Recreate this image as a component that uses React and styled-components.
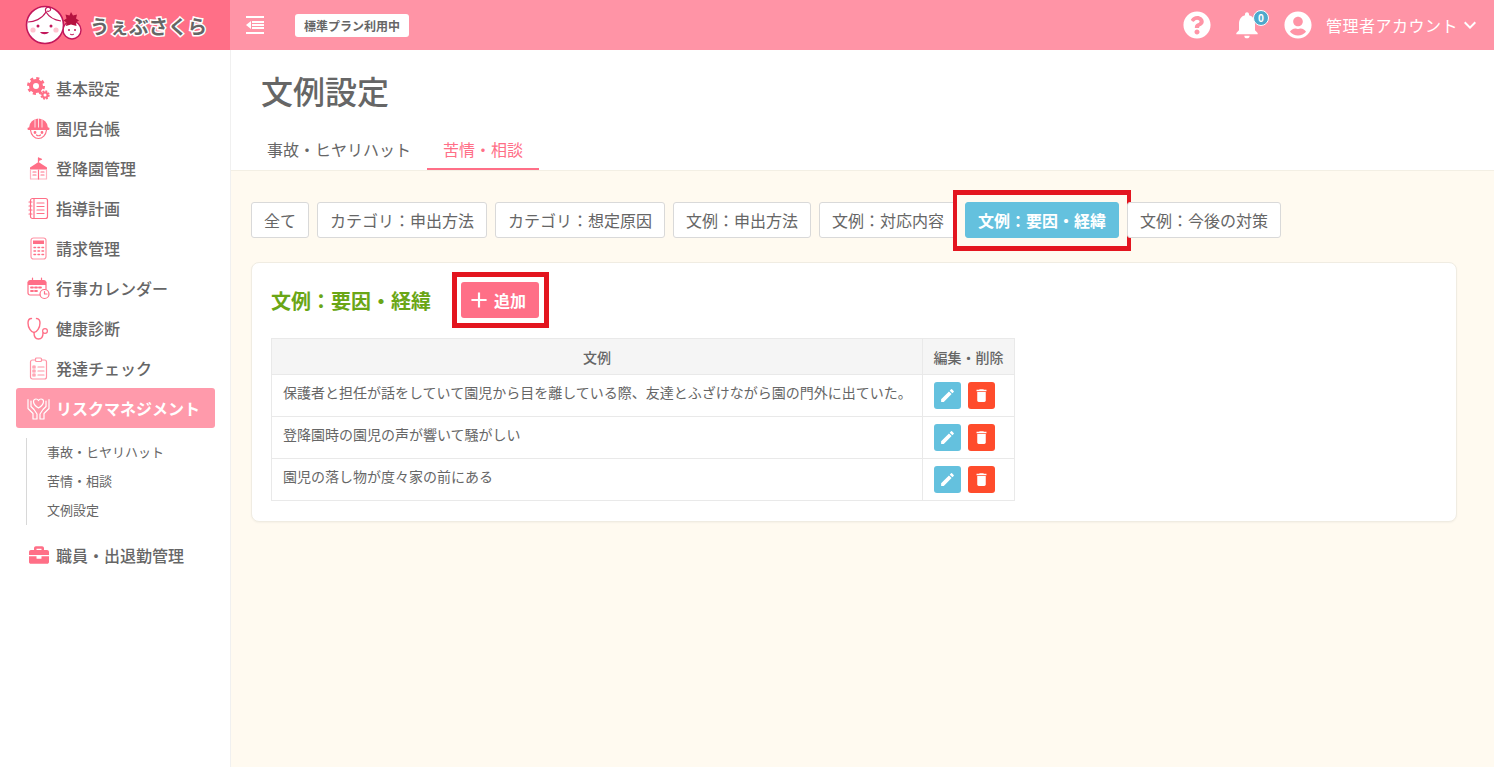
import React from 'react'
import styled, { createGlobalStyle } from 'styled-components'
import { MdEdit, MdDelete, MdAdd, MdKeyboardArrowDown, MdNotifications } from 'react-icons/md'
import { FaQuestionCircle, FaUserCircle, FaBriefcase } from 'react-icons/fa'

const GlobalStyle = createGlobalStyle`
    html, body { margin: 0; padding: 0; height: 100%; }
    body {
        font-family: 'Noto Sans CJK JP', 'Noto Sans', sans-serif;
        color: #666;
        background: #fff;
        overflow: hidden;
    }
`
const Page = styled.div`
    width: 1494px;
    height: 767px;
    display: flex;
    flex-direction: column;
`
const Header = styled.header`
    height: 50px;
    display: flex;
    align-items: center;
    background: #ff94a6;
    flex-shrink: 0;
`
const LogoArea = styled.div`
    width: 230px;
    height: 50px;
    background: #ff6f87;
    display: flex;
    align-items: center;
    padding-left: 25px;
    box-sizing: border-box;
    gap: 7px;
    flex-shrink: 0;
`
const LogoText = styled.span`
    font-size: 19.5px;
    font-weight: 700;
    color: #666;
    paint-order: stroke fill;
    -webkit-text-stroke: 3px #fff;
    white-space: nowrap;
`
const MenuToggle = styled.div`
    display: flex;
    margin-left: 16px;
    width: 18px;
    height: 18px;
`
const PlanBadge = styled.div`
    margin-left: 31px;
    height: 23px;
    width: 114px;
    display: flex;
    align-items: center;
    justify-content: center;
    background: #fff;
    border-radius: 3px;
    font-size: 12px;
    font-weight: 700;
    color: #666;
`
const HeaderRight = styled.div`
    margin-left: auto;
    display: flex;
    align-items: center;
    color: #fff;
    padding-right: 12px;
`
const BellWrap = styled.div`
    position: relative;
    display: flex;
    margin-left: 20px;
    margin-right: 21px;
`
const BellCount = styled.span`
    position: absolute;
    top: 1px;
    right: -6px;
    width: 16px;
    height: 16px;
    box-sizing: border-box;
    border-radius: 50%;
    background: #4ea9cc;
    border: 1px solid #fff;
    font-size: 10px;
    font-weight: 700;
    line-height: 13px;
    text-align: center;
    color: #fff;
`
const AccountName = styled.span`
    font-size: 16px;
    letter-spacing: 0.5px;
    margin-left: 14px;
`
const Body = styled.div`
    flex: 1;
    display: flex;
    min-height: 0;
`
const Sidebar = styled.nav`
    width: 231px;
    box-sizing: border-box;
    border-right: 1px solid #f0f0f0;
    padding: 18px 15px 0 16px;
    flex-shrink: 0;
`
const NavItem = styled.div`
    height: 40px;
    display: flex;
    align-items: center;
    padding-left: 11px;
    gap: 6px;
    font-size: 16px;
    font-weight: ${p => (p.$active ? 700 : 500)};
    color: ${p => (p.$active ? '#fff' : '#666')};
    background: ${p => (p.$active ? '#ff9aab' : 'transparent')};
    border-radius: 3px;
    > svg { flex-shrink: 0; }
`
const IconSlot = styled.span`
    width: 23px;
    height: 23px;
    display: flex;
    align-items: center;
    justify-content: center;
    flex-shrink: 0;
`
const SubNav = styled.div`
    margin: 10px 0 10px 10px;
    border-left: 1px solid #d8d8d8;
    display: flex;
    flex-direction: column;
`
const SubItem = styled.div`
    height: 29px;
    line-height: 28px;
    padding-left: 20px;
    font-size: 13px;
    color: #666;
`
const Main = styled.main`
    flex: 1;
    display: flex;
    flex-direction: column;
    min-width: 0;
`
const TitleBlock = styled.div`
    height: 121px;
    box-sizing: border-box;
    padding: 15px 0 0 20px;
    border-bottom: 1px solid #f3efe4;
    display: flex;
    flex-direction: column;
`
const Title = styled.h1`
    margin: 0 0 0 10px;
    font-size: 32px;
    font-weight: 500;
    line-height: 50px;
    color: #666;
`
const Tabs = styled.div`
    margin-top: 15px;
    display: flex;
    height: 40px;
`
const Tab = styled.div`
    padding: 0 16px;
    line-height: 38px;
    height: 40px;
    box-sizing: border-box;
    font-size: 16px;
    color: ${p => (p.$active ? '#ff6f87' : '#666')};
    border-bottom: 2px solid ${p => (p.$active ? '#ff6f87' : 'transparent')};
`
const Content = styled.div`
    flex: 1;
    background: #fffaf0;
    padding: 31px 37px 0 20px;
`
const Filters = styled.div`
    display: flex;
    gap: 8px;
    margin-bottom: 24px;
`
const Filter = styled.div`
    position: relative;
    height: 36px;
    box-sizing: border-box;
    padding: 0 12px;
    line-height: 35px;
    font-size: 16px;
    white-space: nowrap;
    color: ${p => (p.$active ? '#fff' : '#666')};
    font-weight: ${p => (p.$active ? 700 : 400)};
    background: ${p => (p.$active ? '#64c1de' : '#fff')};
    border: 1px solid ${p => (p.$active ? '#64c1de' : '#d9d9d9')};
    border-radius: 3px;
    ${p => p.$marked && `
        &::after {
            content: '';
            position: absolute;
            inset: -13px -13px -14px -13px;
            border: solid #e3151f;
            border-width: 5px 4px;
        }
    `}
`
const Card = styled.section`
    background: #fff;
    border: 1px solid #f0ece2;
    border-radius: 8px;
    padding: 19px 19px 20px;
    box-shadow: 0 1px 2px rgba(0, 0, 0, 0.04);
`
const CardHead = styled.div`
    display: flex;
    align-items: center;
    height: 36px;
    margin-bottom: 20px;
`
const CardTitle = styled.h2`
    margin: 0;
    font-size: 20px;
    font-weight: 700;
    color: #6aa616;
`
const AddButton = styled.div`
    position: relative;
    margin-left: 30px;
    width: 78px;
    height: 36px;
    box-sizing: border-box;
    padding-left: 5px;
    display: flex;
    align-items: center;
    gap: 2px;
    border-radius: 3px;
    background: #ff6f87;
    color: #fff;
    font-size: 16px;
    font-weight: 700;
    &::after {
        content: '';
        position: absolute;
        inset: -10px -10px -10px -9px;
        border: 5px solid #e3151f;
    }
`
const Table = styled.table`
    border-collapse: collapse;
    width: 743px;
    table-layout: fixed;
    font-size: 14px;
    color: #666;
`
const Th = styled.th`
    height: 35px;
    padding: 0;
    background: #f5f5f5;
    border: 1px solid #e9e9e9;
    font-weight: 500;
    font-size: 14px;
`
const Td = styled.td`
    height: 42px;
    padding: 0 11px 7px;
    box-sizing: border-box;
    border: 1px solid #e9e9e9;
    white-space: nowrap;
`
const ActionCell = styled.td`
    height: 42px;
    padding: 0 0 0 11px;
    box-sizing: border-box;
    border: 1px solid #e9e9e9;
`
const Actions = styled.div`
    display: flex;
    gap: 7px;
`
const IconButton = styled.div`
    width: 27px;
    height: 27px;
    border-radius: 3px;
    display: flex;
    align-items: center;
    justify-content: center;
    color: #fff;
    background: ${p => (p.$danger ? '#ff4c2c' : '#64c1de')};
`

const PINK = '#ff6f87'
const BERRY = '#c2185b'

const LogoMark = () => (
    <svg width="58" height="44" viewBox="0 0 58 44" fill="none">
        <circle cx="47" cy="27" r="9" fill="#fff" stroke={BERRY} strokeWidth="1.4" />
        <circle cx="20" cy="22" r="18.500" fill="#fff" stroke={BERRY} strokeWidth="1.6" />
        <path d="M3 19c6 0 14-3 18-10 3 5 8 8 15 9" stroke={BERRY} strokeWidth="1.2" />
        <path d="M21 9c-2-4 2-6 4-4s-1 4-3 3" stroke={BERRY} strokeWidth="1.1" />
        <circle cx="8" cy="27" r="2.600" fill="#ffc4d0" />
        <circle cx="31" cy="27" r="2.600" fill="#ffc4d0" />
        <circle cx="13" cy="23" r="1.500" fill={BERRY} />
        <circle cx="26" cy="23" r="1.500" fill={BERRY} />
        <path d="M15 29c2 3 7 3 9 0z" fill={BERRY} />
        <circle cx="44" cy="27" r="1" fill={BERRY} />
        <circle cx="50" cy="27" r="1" fill={BERRY} />
        <path d="M45 31c1 1 3 1 4 0" stroke={BERRY} strokeWidth="1" />
        <path d="M46 9l2 3.500 4-1-1 4 3 2-3 2 .5 3.500-5.500-1.500-5 1.500.5-3.500-3-2 3-2-1-4 4 1z" fill="#b5123f" />
    </svg>
)

const IndentIcon = () => (
    <svg width="18" height="18" viewBox="0 0 18 18" fill="#fff">
        <rect x="0" y="0" width="18" height="2" />
        <rect x="6" y="5" width="12" height="2" />
        <rect x="6" y="8" width="12" height="2" />
        <rect x="6" y="11" width="12" height="2" />
        <rect x="0" y="16" width="18" height="2" />
        <path d="M0 9l5-4v8z" />
    </svg>
)

const Outline = ({ children, color = PINK }) => (
    <svg width="23" height="23" viewBox="0 0 23 23" fill="none" stroke={color} strokeWidth="1.2" strokeLinecap="round" strokeLinejoin="round">
        {children}
    </svg>
)

const GearsIcon = () => (
    <Outline>
        <circle cx="9" cy="9" r="5" strokeWidth="4" />
        <circle cx="9" cy="9" r="7.500" strokeWidth="3" strokeDasharray="3 2.890" strokeLinecap="butt" />
        <circle cx="18" cy="18" r="2.500" strokeWidth="2" />
        <circle cx="18" cy="18" r="3.800" strokeWidth="1.800" strokeDasharray="1.800 1.180" strokeLinecap="butt" />
    </Outline>
)
const ChildIcon = () => (
    <Outline>
        <path d="M2 11a9.500 9.500 0 0 1 19 0z" fill={PINK} stroke="none" />
        <path d="M8 2.500V11M15 2.500V11M11.500 1.500V11" stroke="#fff" strokeWidth="0.8" />
        <rect x="0.500" y="10.500" width="22" height="2.500" rx="1" fill={PINK} stroke="none" />
        <path d="M3.500 13c.5 5 4 8.500 8 8.500s7.500-3.500 8-8.500" />
        <circle cx="8" cy="15.500" r=".8" fill={PINK} />
        <circle cx="15" cy="15.500" r=".8" fill={PINK} />
        <path d="M9.500 18c1 1 3 1 4 0" />
    </Outline>
)
const SchoolIcon = () => (
    <Outline>
        <path d="M11.500 1v4" />
        <path d="M11.500 1l3 1.200-3 1.200" fill={PINK} />
        <path d="M3 10.500L11.500 5 20 10.500v2H3z" fill={PINK} stroke="none" />
        <path d="M3.500 12.500V22h16v-9.500" stroke="#ffb3c0" />
        <path d="M11.500 13v9M6 15h3M14 15h3M6 18h3M14 18h3" />
    </Outline>
)
const NotebookIcon = () => (
    <Outline>
        <rect x="3.500" y="1.500" width="17" height="20" rx="2" />
        <path d="M7 1.500v20M10 6h7M10 9.500h7M10 13h7M10 16.500h7" />
        <path d="M2 5h3M2 9h3M2 13h3M2 17h3" />
    </Outline>
)
const CalculatorIcon = () => (
    <Outline>
        <rect x="4" y="1" width="15" height="21" rx="2.500" stroke="#ff94a6" />
        <rect x="6" y="3.500" width="11" height="3.500" fill={PINK} stroke="none" />
        <path d="M7 10.500h1.500M11 10.500h1.500M15 10.500h1.500M7 14h1.500M11 14h1.500M15 14h1.500M7 17.500h1.500M11 17.500h1.500M15 17.500h1.500" strokeWidth="1.500" />
    </Outline>
)
const CalendarIcon = () => (
    <Outline>
        <path d="M13 18H3a2 2 0 0 1-2-2V5h18v7" />
        <path d="M1 5a2 2 0 0 1 2-2h14a2 2 0 0 1 2 2v3H1z" fill={PINK} stroke="none" />
        <path d="M5.500 1v4M14.500 1v4" />
        <path d="M4 10.500h2M8 10.500h2M12 10.500h2M4 14h2M8 14h2" strokeWidth="1.800" />
        <circle cx="17.500" cy="17" r="4.500" />
        <path d="M17.500 14.500V17h2.500" />
    </Outline>
)
const StethoscopeIcon = () => (
    <Outline>
        <path d="M4.500 1.500C2 1.500 1 3.500 1 6c0 4.500 3 9.500 6 9.500S13 10.500 13 6c0-2.500-1-4.500-3.500-4.500" strokeWidth="1.400" />
        <path d="M7 15.500c0 3.500 1.500 6.500 4.500 6.500s4.500-2.500 4.500-6" strokeWidth="1.400" />
        <circle cx="18" cy="14" r="2.400" />
    </Outline>
)
const ChecklistIcon = () => (
    <Outline color="#ff94a6">
        <rect x="3.500" y="3" width="16" height="19" rx="2" />
        <rect x="8.500" y="1" width="6" height="3.500" rx="1" fill="#fff" />
        <path d="M6 9h2v2H6zM6 13h2v2H6zM6 17h2v2H6zM11 10h6M11 14h6M11 18h6" />
    </Outline>
)
const CareIcon = () => (
    <Outline color="#fff">
        <path d="M11.500 11S6.500 8 6.500 4.500C6.500 3 7.700 2 9 2c1.100 0 2 .6 2.500 1.600C12 2.600 12.900 2 14 2c1.300 0 2.500 1 2.500 2.500C16.500 8 11.500 11 11.500 11z" />
        <path d="M1 2.500v9L6 16.500V22h4v-5l-3-4.500L4 9.500V4" />
        <path d="M22 2.500v9L17 16.500V22h-4v-5l3-4.500 3-3V4" />
    </Outline>
)

const navTop = [
    ['基本設定', <GearsIcon />],
    ['園児台帳', <ChildIcon />],
    ['登降園管理', <SchoolIcon />],
    ['指導計画', <NotebookIcon />],
    ['請求管理', <CalculatorIcon />],
    ['行事カレンダー', <CalendarIcon />],
    ['健康診断', <StethoscopeIcon />],
    ['発達チェック', <ChecklistIcon />],
]
const subNav = ['事故・ヒヤリハット', '苦情・相談', '文例設定']
const filters = ['全て', 'カテゴリ：申出方法', 'カテゴリ：想定原因', '文例：申出方法', '文例：対応内容', '文例：要因・経緯', '文例：今後の対策']
const rows = [
    '保護者と担任が話をしていて園児から目を離している際、友達とふざけながら園の門外に出ていた。',
    '登降園時の園児の声が響いて騒がしい',
    '園児の落し物が度々家の前にある',
]

export default function App() {
    return (
        <Page>
            <GlobalStyle />
            <Header>
                <LogoArea>
                    <LogoMark />
                    <LogoText>うぇぶさくら</LogoText>
                </LogoArea>
                <MenuToggle><IndentIcon /></MenuToggle>
                <PlanBadge>標準プラン利用中</PlanBadge>
                <HeaderRight>
                    <FaQuestionCircle size={28} />
                    <BellWrap>
                        <MdNotifications size={32} />
                        <BellCount>0</BellCount>
                    </BellWrap>
                    <FaUserCircle size={28} />
                    <AccountName>管理者アカウント</AccountName>
                    <MdKeyboardArrowDown size={24} />
                </HeaderRight>
            </Header>
            <Body>
                <Sidebar>
                    {navTop.map(([label, icon]) => (
                        <NavItem key={label}>{icon}{label}</NavItem>
                    ))}
                    <NavItem $active><CareIcon />リスクマネジメント</NavItem>
                    <SubNav>
                        {subNav.map(label => <SubItem key={label}>{label}</SubItem>)}
                    </SubNav>
                    <NavItem><IconSlot><FaBriefcase size={20} color={PINK} /></IconSlot>職員・出退勤管理</NavItem>
                </Sidebar>
                <Main>
                    <TitleBlock>
                        <Title>文例設定</Title>
                        <Tabs>
                            <Tab>事故・ヒヤリハット</Tab>
                            <Tab $active>苦情・相談</Tab>
                        </Tabs>
                    </TitleBlock>
                    <Content>
                        <Filters>
                            {filters.map((label, i) => (
                                <Filter key={label} $active={i === 5} $marked={i === 5}>{label}</Filter>
                            ))}
                        </Filters>
                        <Card>
                            <CardHead>
                                <CardTitle>文例：要因・経緯</CardTitle>
                                <AddButton><MdAdd size={26} />追加</AddButton>
                            </CardHead>
                            <Table>
                                <colgroup>
                                    <col width="651" />
                                    <col width="92" />
                                </colgroup>
                                <thead>
                                    <tr>
                                        <Th>文例</Th>
                                        <Th>編集・削除</Th>
                                    </tr>
                                </thead>
                                <tbody>
                                    {rows.map(text => (
                                        <tr key={text}>
                                            <Td>{text}</Td>
                                            <ActionCell>
                                                <Actions>
                                                    <IconButton><MdEdit size={17} /></IconButton>
                                                    <IconButton $danger><MdDelete size={17} /></IconButton>
                                                </Actions>
                                            </ActionCell>
                                        </tr>
                                    ))}
                                </tbody>
                            </Table>
                        </Card>
                    </Content>
                </Main>
            </Body>
        </Page>
    )
}
